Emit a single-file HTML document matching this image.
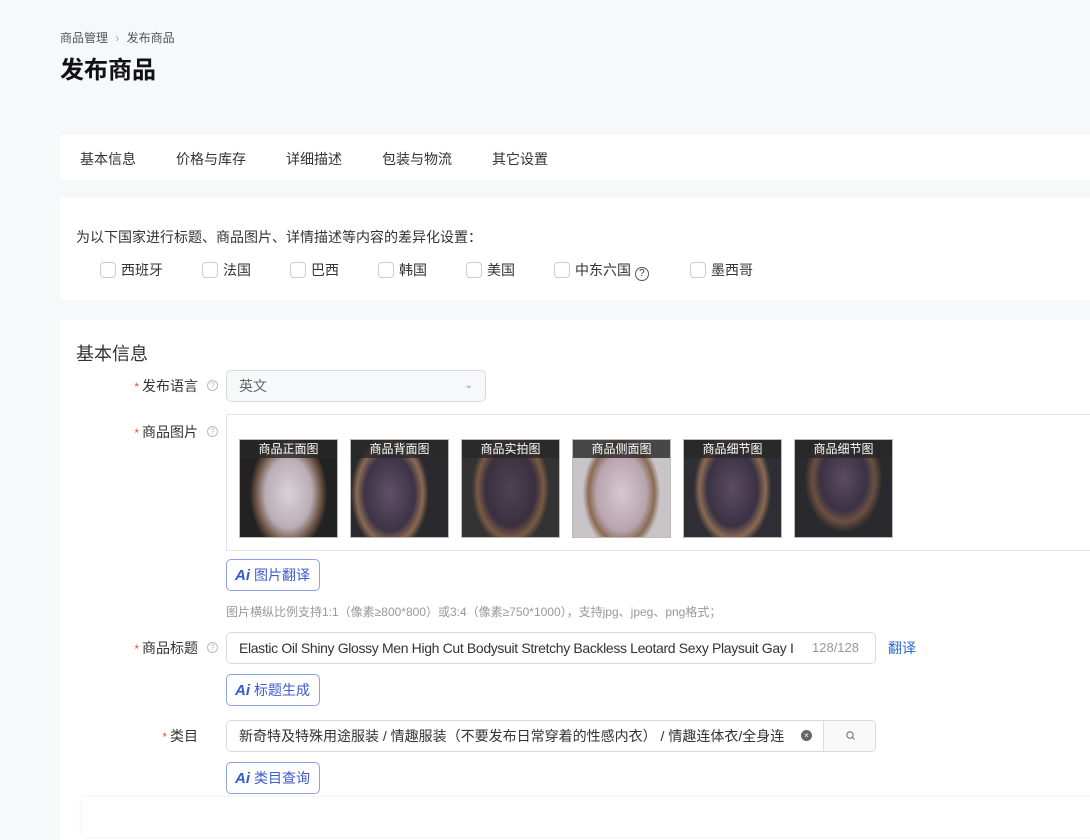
<!DOCTYPE html>
<html><head><meta charset="utf-8">
<style>
*{box-sizing:border-box;margin:0;padding:0}
body{width:1090px;height:834px;overflow:hidden;background:#f7f8fa;font-family:"Liberation Sans","Noto Sans CJK SC",sans-serif;color:#333;position:relative}
.a{position:absolute;white-space:nowrap}
.card{position:absolute;background:#fff;left:60px;right:0}
.cb{display:inline-block;width:16px;height:16px;border:1px solid #ccc;border-radius:4px;vertical-align:-3px;margin-right:5px;background:#fff}
.lbl{position:absolute;font-size:14px;color:#333;text-align:right;width:140px;left:58px}
.lbl b{color:#e4572e;font-weight:normal;font-size:12px;margin-right:3px}
.q{position:absolute;width:11px;height:11px;border:1px solid #bbb;border-radius:50%;font-size:8px;color:#bbb;text-align:center;line-height:9px}
.inp{position:absolute;border:1px solid #d9d9d9;border-radius:5px;background:#fff;font-size:14px;color:#333;padding-left:12px}
.ai{position:absolute;left:226px;width:94px;height:32px;border:1px solid #8ea2e6;border-radius:5px;color:#3d5bd0;font-size:14px;line-height:30px;padding-left:8px;background:#fff}
.ai i{font-style:italic;font-weight:bold;font-size:15px;margin-right:4px;color:#3557cf}
.th{position:absolute;top:439px;width:99px;height:99px;border:1px solid #bbb;overflow:hidden}
.th span{position:absolute;top:0;left:0;right:0;height:18px;background:rgba(40,40,40,.8);color:#fff;font-size:12px;text-align:center;line-height:18px}
</style></head><body>
<div class="a" style="left:60px;top:29px;font-size:12px;color:#555">商品管理 <span style="color:#aaa;margin:0 4px">›</span> 发布商品</div>
<div class="a" style="left:60px;top:50px;font-size:24px;font-weight:bold;color:#111">发布商品</div>

<div class="card" style="top:135px;height:45px;font-size:14px;color:#333">
<span class="a" style="left:20px;top:14px">基本信息</span>
<span class="a" style="left:116px;top:14px">价格与库存</span>
<span class="a" style="left:226px;top:14px">详细描述</span>
<span class="a" style="left:322px;top:14px">包装与物流</span>
<span class="a" style="left:432px;top:14px">其它设置</span>
</div>

<div class="card" style="top:198px;height:102px;font-size:14px">
<span class="a" style="left:16px;top:29px;color:#333">为以下国家进行标题、商品图片、详情描述等内容的差异化设置：</span>
<span class="a" style="left:40px;top:62px"><i class="cb"></i>西班牙</span>
<span class="a" style="left:142px;top:62px"><i class="cb"></i>法国</span>
<span class="a" style="left:230px;top:62px"><i class="cb"></i>巴西</span>
<span class="a" style="left:318px;top:62px"><i class="cb"></i>韩国</span>
<span class="a" style="left:406px;top:62px"><i class="cb"></i>美国</span>
<span class="a" style="left:494px;top:62px"><i class="cb"></i>中东六国 <i style="display:inline-block;width:14px;height:14px;border:1px solid #555;border-radius:50%;font-size:10px;font-style:normal;text-align:center;line-height:12px;vertical-align:-1px">?</i></span>
<span class="a" style="left:630px;top:62px"><i class="cb"></i>墨西哥</span>
</div>

<div class="card" style="top:320px;height:520px"></div>
<div class="a" style="left:76px;top:340px;font-size:18px;color:#333">基本信息</div>

<div class="lbl" style="top:376px"><b>*</b>发布语言</div><div class="q" style="left:207px;top:380px">?</div>
<div class="inp" style="left:226px;top:370px;width:260px;height:32px;line-height:30px;background:#f7f8fa;color:#666">英文<span style="position:absolute;right:12px;top:0;font-size:10px;color:#888">⌄</span></div>

<div class="lbl" style="top:422px"><b>*</b>商品图片</div><div class="q" style="left:207px;top:426px">?</div>
<div class="a" style="left:226px;top:414px;width:870px;height:137px;border:1px solid #e3e3e3"></div>
<div class="th" style="left:239px;background:radial-gradient(ellipse 40% 60% at 50% 55%,#d9d3d8,#b9aeb5 60%,#6a5040 85%,#222)"><span>商品正面图</span></div>
<div class="th" style="left:350px;background:radial-gradient(ellipse 40% 60% at 40% 55%,#5e5068,#3e3446 65%,#8a6a52 85%,#2a2a2e)"><span>商品背面图</span></div>
<div class="th" style="left:461px;background:radial-gradient(ellipse 40% 60% at 50% 50%,#4c4252,#3a3040 65%,#7a5a44 85%,#333)"><span>商品实拍图</span></div>
<div class="th" style="left:572px;background:radial-gradient(ellipse 40% 60% at 50% 55%,#d8c8d0,#b8a4ae 65%,#8a6a54 85%,#c8c4c8)"><span>商品侧面图</span></div>
<div class="th" style="left:683px;background:radial-gradient(ellipse 40% 60% at 50% 50%,#5a4c62,#3c3244 65%,#8a6a52 85%,#2e2e34)"><span>商品细节图</span></div>
<div class="th" style="left:794px;background:radial-gradient(ellipse 40% 55% at 50% 40%,#5a4c62,#3c3244 60%,#6a5040 80%,#2a2a2e)"><span>商品细节图</span></div>

<div class="ai" style="top:559px"><i>Ai</i>图片翻译</div>
<div class="a" style="left:226px;top:603px;font-size:12px;color:#999">图片横纵比例支持1:1（像素≥800*800）或3:4（像素≥750*1000），支持jpg、jpeg、png格式；</div>

<div class="lbl" style="top:638px"><b>*</b>商品标题</div><div class="q" style="left:207px;top:642px">?</div>
<div class="inp" style="left:226px;top:632px;width:650px;height:32px;line-height:30px"><span style="display:inline-block;width:567px;overflow:hidden;letter-spacing:-0.35px;vertical-align:top">Elastic Oil Shiny Glossy Men High Cut Bodysuit Stretchy Backless Leotard Sexy Playsuit Gay I</span><span style="position:absolute;right:16px;top:0;color:#999;font-size:13px">128/128</span></div>
<div class="a" style="left:888px;top:638px;font-size:14px;color:#2f6bd6">翻译</div>
<div class="ai" style="top:674px"><i>Ai</i>标题生成</div>

<div class="lbl" style="top:726px"><b>*</b>类目</div>
<div class="inp" style="left:226px;top:720px;width:650px;height:32px;line-height:30px;overflow:hidden">新奇特及特殊用途服装 / 情趣服装（不要发布日常穿着的性感内衣） / 情趣连体衣/全身连
<span style="position:absolute;left:574px;top:9px;width:11px;height:11px;border-radius:50%;background:#666;color:#fff;font-size:8px;line-height:11px;text-align:center">×</span>
<span style="position:absolute;left:596px;top:0;width:54px;height:30px;border-left:1px solid #ddd;background:#f9f9fa"><svg width="54" height="30" viewBox="0 0 54 30"><circle cx="26" cy="14" r="3.2" fill="none" stroke="#777" stroke-width="1.1"/><path d="M28.3 16.3l2.2 2.2" stroke="#777" stroke-width="1.1"/></svg></span></div>
<div class="ai" style="top:762px"><i>Ai</i>类目查询</div>

<div class="a" style="left:82px;top:797px;width:1010px;height:40px;background:#fff;box-shadow:0 0 4px rgba(0,0,0,.08)"></div>
</body></html>
